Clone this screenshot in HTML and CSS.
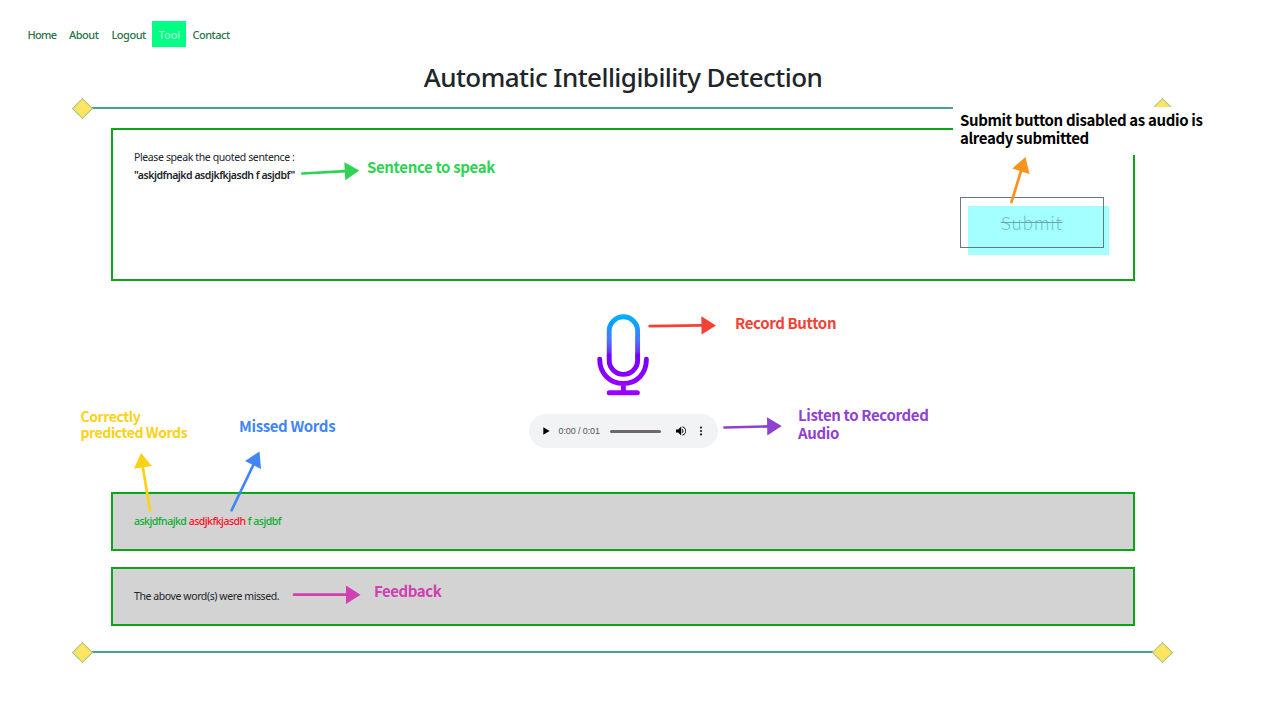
FILE: index.html
```html
<!DOCTYPE html>
<html lang="en">
<head>
<meta charset="utf-8">
<title>Automatic Intelligibility Detection</title>
<link rel="stylesheet" href="styles.css">
</head>
<body>
<nav class="nav">
  <a class="nav-link home">Home</a>
  <a class="nav-link about">About</a>
  <a class="nav-link logout">Logout</a>
  <a class="nav-link active">Tool</a>
  <a class="nav-link contact">Contact</a>
</nav>
<main class="page">
  <h1 class="title">Automatic Intelligibility Detection</h1>
  <div class="rule"><i class="diamond"></i><span class="line"></span><i class="diamond"></i></div>
  <section class="card prompt">
    <div class="sentence">
      <p class="intro">Please speak the quoted sentence :</p>
      <p class="quote">"askjdfnajkd asdjkfkjasdh f asjdbf"</p>
    </div>
    <button class="submit" disabled><span class="submit-text">Submit</span></button>
  </section>
  <svg class="mic" viewBox="0 0 52 82" fill="none">
    <defs>
      <linearGradient id="mic-fill" gradientUnits="userSpaceOnUse" x1="0" y1="0" x2="0" y2="82">
        <stop offset="0" stop-color="#00b2ff"/>
        <stop offset=".08" stop-color="#00a8ff"/>
        <stop offset=".3" stop-color="#487cff"/>
        <stop offset=".46" stop-color="#6a35ff"/>
        <stop offset=".5" stop-color="#7400ff"/>
        <stop offset="1" stop-color="#a000ff"/>
      </linearGradient>
    </defs>
    <g stroke="url(#mic-fill)" stroke-width="4.9" stroke-linecap="round" stroke-linejoin="round">
      <rect x="12.2" y="2.8" width="28.4" height="57.6" rx="14.2"/>
      <path d="M2.7 45.3C2.7 59.5 12.8 69.5 26.4 69.5S49.4 59.5 49.4 45.3M26.4 69.5V77"/>
      <path stroke="none" fill="#9c00ff" d="M12.3 76.2H40.3a2.5 2.5 0 0 1 0 5.1H12.3a2.5 2.5 0 0 1 0-5.1Z"/>
    </g>
  </svg>
  <div class="player">
    <svg class="play" viewBox="0 0 7 8"><path d="M.3.2 6.6 4 .3 7.8Z" fill="#000"/></svg>
    <span class="time">0:00 / 0:01</span>
    <span class="track"></span>
    <svg class="volume" viewBox="0 0 10 10"><path d="M0 3.4H2.2L5.2.6V9.4L2.2 6.6H0Z" fill="#000"/><path d="M6.3 3.2Q7.8 5 6.3 6.8M6.4.8C11 2.2 11 7.8 6.4 9.2" fill="none" stroke="#000" stroke-width="1"/></svg>
    <svg class="more" viewBox="0 0 4 10" fill="#222"><circle cx="2" cy="1.6" r="1.1"/><circle cx="2" cy="5" r="1.1"/><circle cx="2" cy="8.4" r="1.1"/></svg>
  </div>
  <section class="card result"><p class="words"><span class="hit">askjdfnajkd</span> <span class="miss">asdjkfkjasdh</span> <span class="hit">f asjdbf</span></p></section>
  <section class="card feedback"><p class="note">The above word(s) were missed.</p></section>
  <div class="rule bottom"><i class="diamond"></i><span class="line"></span><i class="diamond"></i></div>
</main>

<div class="callout c-submit">Submit button disabled as audio is<br>already submitted</div>
<div class="callout c-sentence">Sentence to speak</div>
<div class="callout c-record">Record Button</div>
<div class="callout c-listen">Listen to Recorded<br>Audio</div>
<div class="callout c-correct">Correctly<br>predicted Words</div>
<div class="callout c-missed">Missed Words</div>
<div class="callout c-feedback">Feedback</div>
<svg class="arrows" viewBox="0 0 1280 720" stroke-width="2.7" stroke-linecap="round">
  <g stroke="#2dd352" fill="#2dd352"><path d="M302.3 173.5 346 171.2"/><path stroke="none" d="M344.3 162.3 359.3 170.6 345.3 180.3Z"/></g>
  <g stroke="#f7931e" fill="#f7931e"><path d="M1011.5 202 1021 171"/><path stroke="none" d="M1025.5 157 1029.5 174 1012.3 168.5Z"/></g>
  <g stroke="#f24236" fill="#f24236"><path d="M649.7 326.2 702 325.4"/><path stroke="none" d="M701.3 316.3 716 325.4 701.6 334.5Z"/></g>
  <g stroke="#8f42d0" fill="#8f42d0"><path d="M724.5 427.5 768 426.4"/><path stroke="none" d="M767 417.2 781.7 426 767.3 435.5Z"/></g>
  <g stroke="#fcd116" fill="#fcd116"><path d="M150 510.5 142.8 467"/><path stroke="none" d="M141 453 151.8 466 134 468.8Z"/></g>
  <g stroke="#4285f4" fill="#4285f4"><path d="M231.6 510.3 253.3 465"/><path stroke="none" d="M259.5 451.5 261 469 245 461Z"/></g>
  <g stroke="#cf40b2" fill="#cf40b2"><path d="M294 594.7H347"/><path stroke="none" d="M346 585.5 360.5 594.7 346 604Z"/></g>
</svg>
</body>
</html>
```

FILE: styles.css
```css
* { box-sizing: border-box; }
body {
  margin: 0;
  width: 1280px;
  height: 720px;
  overflow: hidden;
  position: relative;
  background: #fff;
  color: #212529;
  font-family: "Noto Sans", "Open Sans", sans-serif;
}
p, h1 { margin: 0; }
.nav { display: flex; height: 47px; padding: 21px 0 0 21px; }
.nav-link {
  flex: none;
  height: 26px;
  padding-left: 6.5px;
  font-size: 11px;
  letter-spacing: -.5px;
  line-height: 27px;
  color: #28744a;
  white-space: nowrap;
  font-weight: 500;
}
.home { letter-spacing: -.7px; width: 41.5px; }
.about { width: 42.5px; }
.logout { width: 47px; }
.active { width: 34px; background: #00ff84; color: #a7ffd3; letter-spacing: 0; }
.page { width: 1101px; margin-left: 72px; display: flex; flex-direction: column; align-items: center; }
.title { height: 51px; padding: 9.5px 0 0 1px; line-height: 40px; font-size: 26px; letter-spacing: -.56px; font-weight: 500; white-space: nowrap; }
.rule { display: flex; align-items: center; width: 1101px; height: 20px; padding: 0 3px; }
.diamond { width: 15px; height: 15px; flex: none; background: #ffe363; border: 1px solid #9fc58d; transform: rotate(45deg); }
.line { flex: 1; height: 2px; margin: 0 2px; background: #46a38a; }
.bottom { margin-top: 16px; }
.card { width: 1024px; margin-left: 1px; border: 2px solid #0ba616; padding: 20px 20px 20px 21px; }
.prompt { height: 153px; margin-top: 10px; display: flex; justify-content: space-between; font-size: 10.5px; }
.sentence { line-height: 18px; white-space: nowrap; margin-top: -2px; }
.intro { letter-spacing: -.38px; }
.quote { font-weight: 600; letter-spacing: -.47px; }
.submit {
  flex: none;
  position: relative;
  width: 144px;
  height: 51px;
  margin: 47px 9.5px 0 0;
  padding: 0;
  border: 1px solid #6d7779;
  background: none;
}
.submit::before { content: ""; position: absolute; left: 7px; top: 8px; width: 141.5px; height: 48.5px; background: #a4ffff; z-index: 0; }
.submit::after { content: ""; position: absolute; inset: -1px; border: 1px solid #66797c; }
.submit-text { position: relative; z-index: 1; font-family: "Noto Sans CJK SC", sans-serif; font-weight: 300; font-size: 17.5px; letter-spacing: .7px; color: #75bfc0; text-decoration: line-through; text-decoration-color: #62aaac; }
.mic { width: 52px; height: 82px; margin-top: 33px; margin-left: 1px; }
.player { width: 189px; height: 34px; margin-top: 18px; margin-left: 1px; border-radius: 17px; background: #f1f3f4; display: flex; align-items: center; padding-left: 14px; }
.play { width: 7px; height: 8px; }
.time { width: 51px; margin-left: 9px; font: 9px "Liberation Sans", sans-serif; letter-spacing: -.1px; color: #555; white-space: nowrap; }
.track { width: 51px; height: 3px; border-radius: 2px; background: #6d696a; }
.volume { width: 10px; height: 10px; margin-left: 15px; }
.more { width: 4px; height: 10px; margin-left: 13px; }
.result, .feedback { height: 59px; background: #d3d3d3; font-size: 10.5px; line-height: 15px; white-space: nowrap; }
.result { margin-top: 44px; }
.feedback { margin-top: 16px; }
.hit { color: #06ad2c; }
.miss { color: #fb0c27; }
.words { font-weight: 500; letter-spacing: -.5px; }
.note { letter-spacing: -.41px; }
.callout { position: absolute; z-index: 2; font-family: "Noto Sans CJK SC", sans-serif; font-weight: 700; font-size: 15px; letter-spacing: -.36px; line-height: 17.8px; white-space: nowrap; }
.c-submit { left: 953px; top: 107px; width: 267px; height: 48px; padding: 4px 7px; background: #fff; color: #000; }
.c-sentence { left: 367px; top: 158px; color: #2dd352; }
.c-record { left: 735px; top: 314px; color: #f24236; }
.c-listen { left: 798px; top: 406px; color: #8f42d0; }
.c-correct { left: 80.5px; top: 408px; font-size: 14px; letter-spacing: -.42px; line-height: 16.3px; color: #fcd116; }
.c-missed { left: 239px; top: 417px; color: #4285f4; }
.c-feedback { left: 374px; top: 582px; letter-spacing: -.45px; color: #cf40b2; }
.arrows { position: absolute; z-index: 3; inset: 0; width: 1280px; height: 720px; pointer-events: none; }
```
